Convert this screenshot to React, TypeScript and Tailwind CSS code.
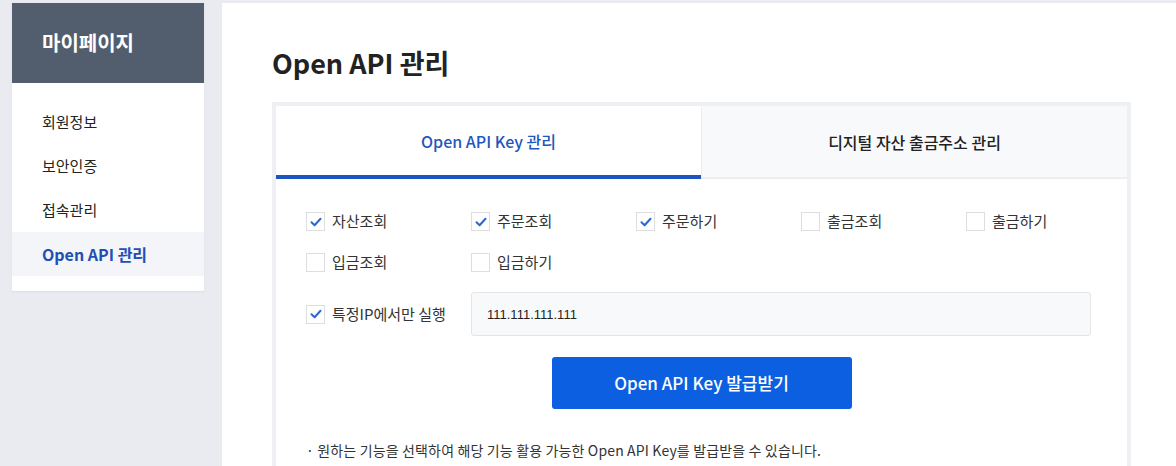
import { useState } from 'react'

const menu = [
  { label: '회원정보', active: false },
  { label: '보안인증', active: false },
  { label: '접속관리', active: false },
  { label: 'Open API 관리', active: true },
]

const perms = [
  { label: '자산조회', checked: true },
  { label: '주문조회', checked: true },
  { label: '주문하기', checked: true },
  { label: '출금조회', checked: false },
  { label: '출금하기', checked: false },
  { label: '입금조회', checked: false },
  { label: '입금하기', checked: false },
]

function Check({ checked }: { checked: boolean }) {
  return (
    <span className="flex h-[19px] w-[19px] shrink-0 items-center justify-center border border-[#dedede] bg-white">
      {checked && (
        <svg width="12" height="10" viewBox="0 0 12 10" fill="none">
          <path d="M1.5 5.2 L4.6 8.2 L10.5 1.8" stroke="#2a66d3" strokeWidth="2" strokeLinecap="round" strokeLinejoin="round" />
        </svg>
      )}
    </span>
  )
}

export default function App() {
  const [items, setItems] = useState(perms)
  const [ipOnly, setIpOnly] = useState(true)

  return (
    <div
      className="flex h-[466px] gap-[18px] overflow-hidden bg-[#e9ebf0] pt-[3px] pl-[12px]"
      style={{ fontFamily: '"Noto Sans CJK KR", "Noto Sans", sans-serif' }}
    >
      <aside className="h-[288px] w-[192px] shrink-0 bg-white shadow-[0_1px_2px_rgba(0,0,0,0.06)]">
        <div className="flex h-[80px] items-center bg-[#525e6d] pl-[30px] text-[20px] font-bold text-white">
          마이페이지
        </div>
        <ul className="pt-[17px]">
          {menu.map((m) => (
            <li
              key={m.label}
              className={
                m.active
                  ? 'flex h-[44px] items-center bg-[#f3f5f9] pl-[30px] text-[16px] font-bold text-[#1f4fb5]'
                  : 'flex h-[44px] items-center pl-[30px] text-[15px] text-[#222]'
              }
            >
              {m.label}
            </li>
          ))}
        </ul>
      </aside>

      <main className="flex-1 bg-white pt-[40px] pl-[50px]">
        <h1 className="text-[27px] leading-[40px] font-bold text-[#222]">Open API 관리</h1>

        <div className="mt-[19px] w-[859px] border-4 border-b-0 border-[#eff0f4]">
          <div className="flex">
            <div className="flex h-[73px] flex-1 items-center justify-center border-b-[4px] border-[#1c55c2] text-[16px] font-medium text-[#1f56c0]">
              Open API Key 관리
            </div>
            <div className="flex h-[73px] flex-1 items-center justify-center border-b-[2px] border-l border-[#eceef2] bg-[#f8f9fb] text-[16px] font-medium text-[#222]">
              디지털 자산 출금주소 관리
            </div>
          </div>

          <div className="px-[30px] pt-[33px] pb-[20px]">
            <div className="grid grid-cols-[165px_165px_165px_165px_1fr] gap-y-[22px]">
              {items.map((p, i) => (
                <label
                  key={p.label}
                  className="flex h-[19px] cursor-pointer items-center gap-[7px] text-[15px] text-[#333]"
                  onClick={() =>
                    setItems(items.map((x, j) => (j === i ? { ...x, checked: !x.checked } : x)))
                  }
                >
                  <Check checked={p.checked} />
                  {p.label}
                </label>
              ))}
            </div>

            <div className="mt-[20px] flex items-center">
              <label
                className="flex w-[165px] cursor-pointer items-center gap-[7px] text-[15px] text-[#333]"
                onClick={() => setIpOnly(!ipOnly)}
              >
                <Check checked={ipOnly} />
                특정IP에서만 실행
              </label>
              <input
                defaultValue="111.111.111.111"
                className="h-[44px] w-[620px] rounded-[3px] border border-[#e3e5e8] bg-[#f8f9fa] px-[15px] text-[13px] text-[#222] outline-none"
                style={{ fontFamily: '"Liberation Sans", Arial, sans-serif' }}
              />
            </div>

            <div className="mt-[21px] flex justify-center">
              <button className="h-[52px] w-[300px] rounded-[3px] bg-[#0b5fe0] text-[17px] font-medium text-white">
                Open API Key 발급받기
              </button>
            </div>

            <p className="mt-[31px] text-[14px] tracking-[0.15px] text-[#333]">
              · 원하는 기능을 선택하여 해당 기능 활용 가능한 Open API Key를 발급받을 수 있습니다.
            </p>
          </div>
        </div>
      </main>
    </div>
  )
}
